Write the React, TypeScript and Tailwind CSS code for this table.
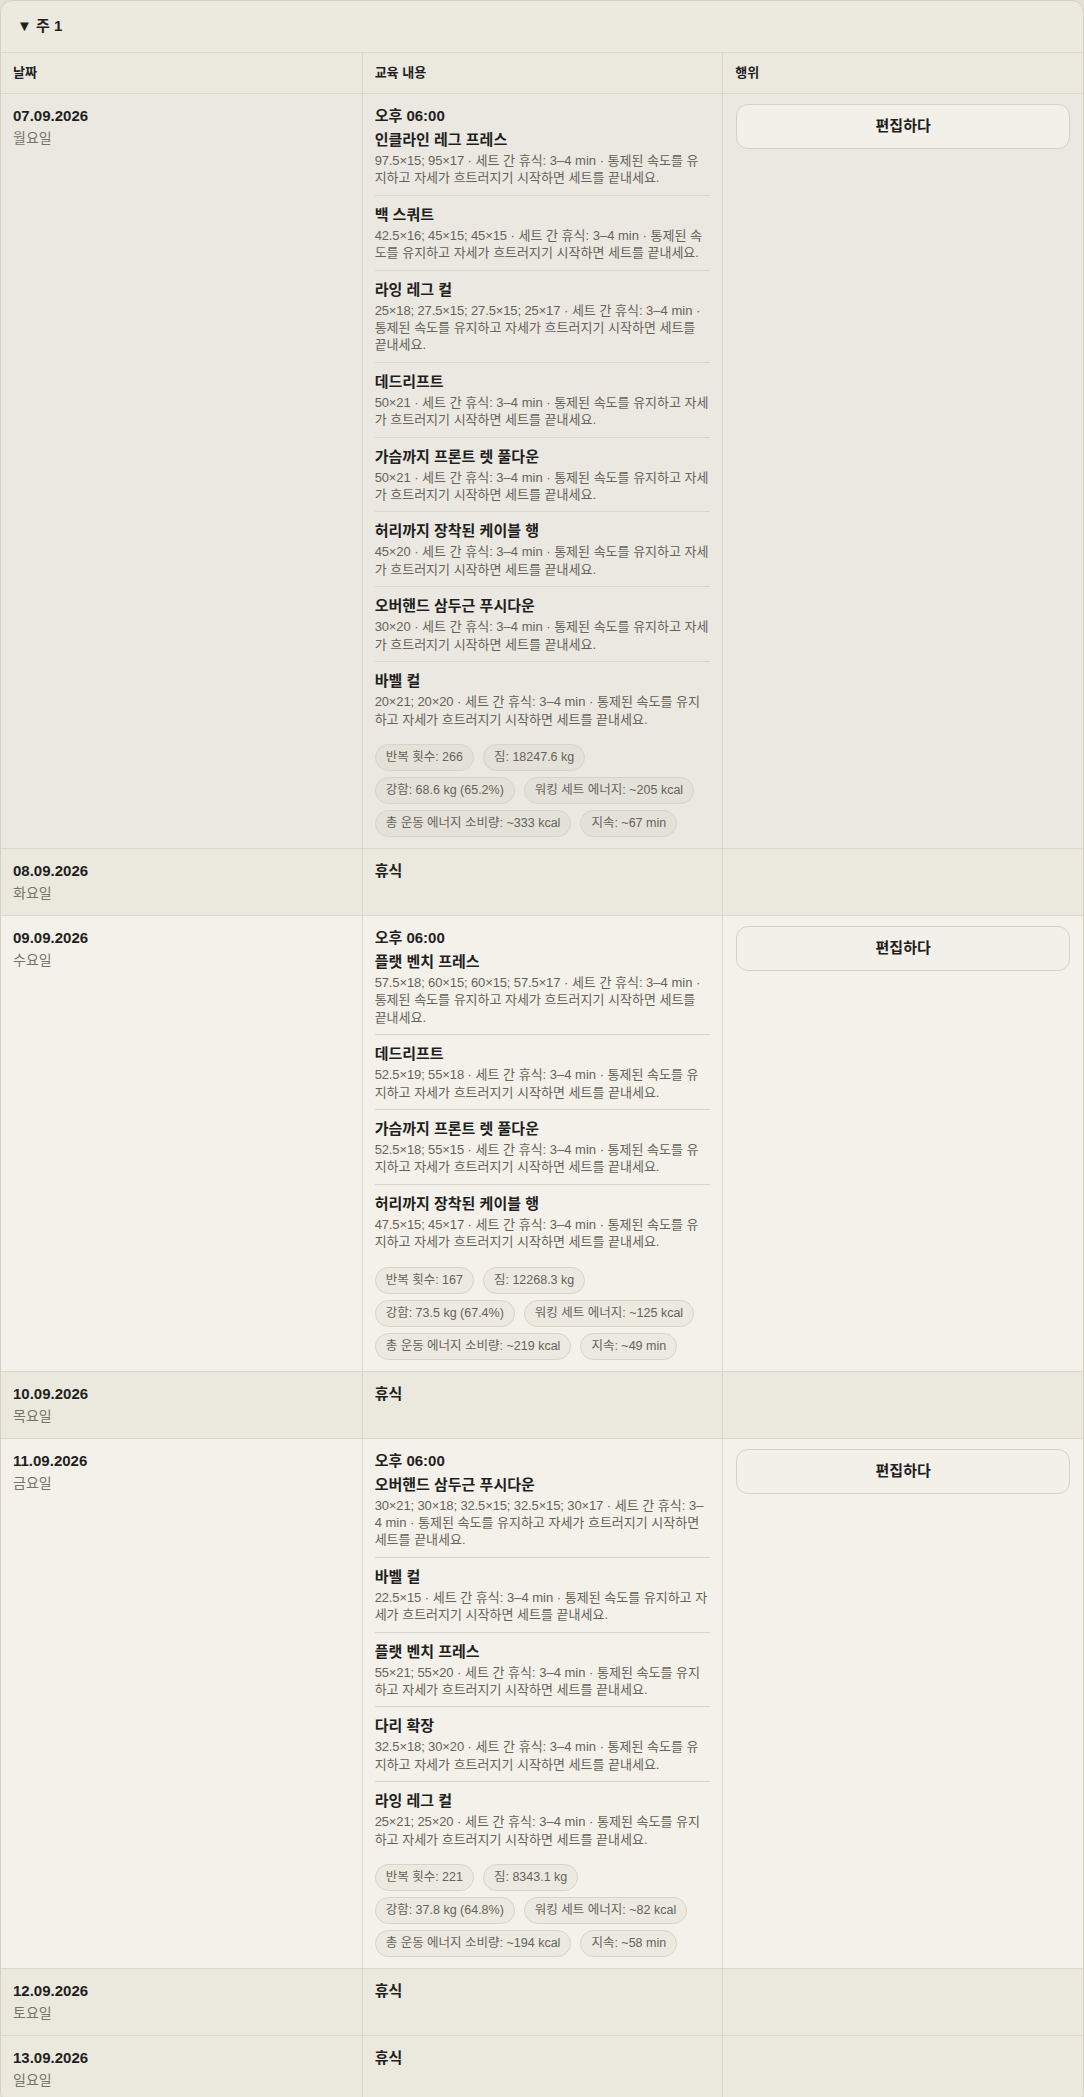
import React from "react";

const NOTE = "세트 간 휴식: 3–4 min · 통제된 속도를 유지하고 자세가 흐트러지기 시작하면 세트를 끝내세요.";

type Exercise = { name: string; sets: string };
type Day = {
  date: string;
  weekday: string;
  time?: string;
  exercises?: Exercise[];
  stats?: string[];
  highlight?: boolean;
};

const days: Day[] = [
  {
    date: "07.09.2026",
    weekday: "월요일",
    time: "오후 06:00",
    highlight: true,
    exercises: [
      { name: "인클라인 레그 프레스", sets: "97.5×15; 95×17" },
      { name: "백 스쿼트", sets: "42.5×16; 45×15; 45×15" },
      { name: "라잉 레그 컬", sets: "25×18; 27.5×15; 27.5×15; 25×17" },
      { name: "데드리프트", sets: "50×21" },
      { name: "가슴까지 프론트 렛 풀다운", sets: "50×21" },
      { name: "허리까지 장착된 케이블 행", sets: "45×20" },
      { name: "오버핸드 삼두근 푸시다운", sets: "30×20" },
      { name: "바벨 컬", sets: "20×21; 20×20" },
    ],
    stats: [
      "반복 횟수: 266",
      "짐: 18247.6 kg",
      "강함: 68.6 kg (65.2%)",
      "워킹 세트 에너지: ~205 kcal",
      "총 운동 에너지 소비량: ~333 kcal",
      "지속: ~67 min",
    ],
  },
  { date: "08.09.2026", weekday: "화요일" },
  {
    date: "09.09.2026",
    weekday: "수요일",
    time: "오후 06:00",
    exercises: [
      { name: "플랫 벤치 프레스", sets: "57.5×18; 60×15; 60×15; 57.5×17" },
      { name: "데드리프트", sets: "52.5×19; 55×18" },
      { name: "가슴까지 프론트 렛 풀다운", sets: "52.5×18; 55×15" },
      { name: "허리까지 장착된 케이블 행", sets: "47.5×15; 45×17" },
    ],
    stats: [
      "반복 횟수: 167",
      "짐: 12268.3 kg",
      "강함: 73.5 kg (67.4%)",
      "워킹 세트 에너지: ~125 kcal",
      "총 운동 에너지 소비량: ~219 kcal",
      "지속: ~49 min",
    ],
  },
  { date: "10.09.2026", weekday: "목요일" },
  {
    date: "11.09.2026",
    weekday: "금요일",
    time: "오후 06:00",
    exercises: [
      { name: "오버핸드 삼두근 푸시다운", sets: "30×21; 30×18; 32.5×15; 32.5×15; 30×17" },
      { name: "바벨 컬", sets: "22.5×15" },
      { name: "플랫 벤치 프레스", sets: "55×21; 55×20" },
      { name: "다리 확장", sets: "32.5×18; 30×20" },
      { name: "라잉 레그 컬", sets: "25×21; 25×20" },
    ],
    stats: [
      "반복 횟수: 221",
      "짐: 8343.1 kg",
      "강함: 37.8 kg (64.8%)",
      "워킹 세트 에너지: ~82 kcal",
      "총 운동 에너지 소비량: ~194 kcal",
      "지속: ~58 min",
    ],
  },
  { date: "12.09.2026", weekday: "토요일" },
  { date: "13.09.2026", weekday: "일요일" },
];

const DayRow = ({ day }: { day: Day }) => {
  const isRest = !day.exercises;
  const bg = isRest ? "bg-[#ebe8de]" : day.highlight ? "bg-[#eae8e1]" : "bg-[#f3f1e9]";

  return (
    <div className={`grid grid-cols-3 border-t border-[#dad6ca] ${bg}`}>
      {/* date */}
      <div className="px-3 pt-3 pb-3">
        <div className="text-[15px] font-bold leading-5 text-[#1f1f1f]">{day.date}</div>
        <div className="mt-[2px] text-[14px] leading-5 text-[#77736b]">{day.weekday}</div>
      </div>

      {/* content */}
      <div className="border-l border-[#dad6ca] px-3 pt-3 pb-[11px]">
        {isRest ? (
          <div className="text-[15px] font-bold leading-5 text-[#1f1f1f]">휴식</div>
        ) : (
          <>
            <div className="mb-[3px] text-[15px] font-bold leading-5 text-[#1f1f1f]">{day.time}</div>
            {day.exercises!.map((ex, i) => {
              const last = i === day.exercises!.length - 1;
              return (
                <div
                  key={i}
                  className={`pb-2 ${i > 0 ? "pt-2" : ""} ${last ? "" : "border-b border-[#d9d5ca]"}`}
                >
                  <div className="mb-[2px] text-[15px] font-bold leading-[21px] text-[#1f1f1f]">{ex.name}</div>
                  <div className="text-[13px] leading-[17.4px] text-[#66635b]">
                    <span className="tracking-[-0.125px]">{ex.sets}</span> · {NOTE}
                  </div>
                </div>
              );
            })}
            <div className="mt-2 flex flex-wrap gap-x-[9px] gap-y-[6px]">
              {day.stats!.map((s, i) => (
                <span
                  key={i}
                  className="rounded-full border border-[#d8d3c5] bg-[#7a6a40]/[0.05] px-[10px] py-[3px] text-[12.5px] leading-[19px] text-[#66635b]"
                >
                  {s}
                </span>
              ))}
            </div>
          </>
        )}
      </div>

      {/* actions */}
      <div className="border-l border-[#dad6ca] px-[13px] pt-[10px] pb-3">
        {!isRest && (
          <button className="h-[45px] w-full rounded-xl border border-[#d6d1c4] bg-[#f2f0e8] text-[15px] font-bold text-[#1f1f1f]">
            편집하다
          </button>
        )}
      </div>
    </div>
  );
};

export default function App() {
  return (
    <div
      className="min-h-screen bg-[#e4e0d4] text-[#1f1f1f]"
      style={{ fontFamily: '"Liberation Sans", "Noto Sans CJK KR", Arial, sans-serif' }}
    >
      <div className="overflow-hidden rounded-xl border border-[#d5d0c2] bg-[#ece9df]">
        <div className="flex h-[51px] items-center px-4 text-[15px] font-bold">▼ 주 1</div>
        <div className="grid grid-cols-3 border-t border-[#dad6ca] bg-[#ebe8de] text-[13px] font-bold">
          <div className="px-3 py-[11px] leading-[18px]">날짜</div>
          <div className="border-l border-[#dad6ca] px-3 py-[11px] leading-[18px]">교육 내용</div>
          <div className="border-l border-[#dad6ca] px-3 py-[11px] leading-[18px]">행위</div>
        </div>
        {days.map((d) => (
          <DayRow key={d.date} day={d} />
        ))}
      </div>
    </div>
  );
}
